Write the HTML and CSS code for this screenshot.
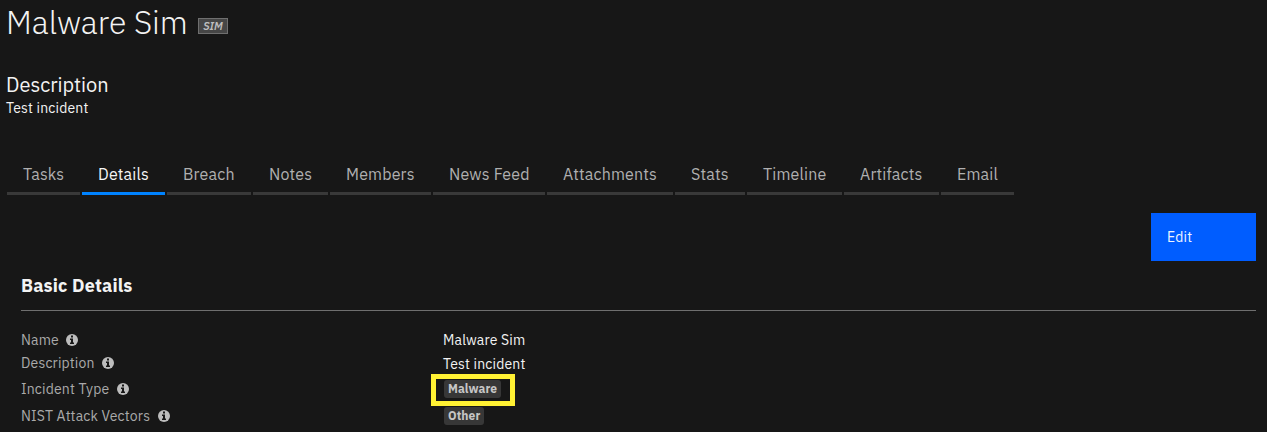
FILE: index.html
```html
<!DOCTYPE html>
<html lang="en">
<head>
<meta charset="utf-8">
<title>Malware Sim</title>
<link rel="stylesheet" href="styles.css">
</head>
<body>
<svg class="sprite" width="0" height="0" aria-hidden="true">
  <symbol id="info" viewBox="0 0 12 12">
    <circle cx="6" cy="6" r="6"/>
    <path class="mark" d="M5 1.5h2v2H5zM4 4.5h3v4h1V10H4V8.5h1V6H4z"/>
  </symbol>
</svg>
<header class="heading">
  <h1 class="title">Malware Sim</h1>
  <span class="sim">SIM</span>
</header>
<section class="summary">
  <h2 class="summary-title">Description</h2>
  <p class="summary-text">Test incident</p>
</section>
<nav class="tabs">
  <a class="tab">Tasks</a>
  <a class="tab active">Details</a>
  <a class="tab">Breach</a>
  <a class="tab">Notes</a>
  <a class="tab">Members</a>
  <a class="tab">News Feed</a>
  <a class="tab">Attachments</a>
  <a class="tab">Stats</a>
  <a class="tab">Timeline</a>
  <a class="tab">Artifacts</a>
  <a class="tab">Email</a>
</nav>
<main class="panel">
  <button class="edit">Edit</button>
  <h3 class="section-title">Basic Details</h3>
  <dl class="fields">
    <dt>Name<svg class="info"><use href="#info"/></svg></dt>
    <dd>Malware Sim</dd>
    <dt>Description<svg class="info"><use href="#info"/></svg></dt>
    <dd class="long-text">Test incident</dd>
    <dt>Incident Type<svg class="info"><use href="#info"/></svg></dt>
    <dd class="marked"><span class="tag tag-malware">Malware</span></dd>
    <dt>NIST Attack Vectors<svg class="info"><use href="#info"/></svg></dt>
    <dd><span class="tag tag-other">Other</span></dd>
  </dl>
</main>
</body>
</html>
```

FILE: styles.css
```css
*, *::before { box-sizing: border-box; }
body {
  margin: 0;
  height: 432px;
  overflow: hidden;
  background: #171717;
  color: #f3f3f3;
  font-family: "IBM Plex Sans", Roboto, "Liberation Sans", sans-serif;
  -webkit-font-smoothing: antialiased;
}
h1, h2, h3, p, dl, dd { margin: 0; }
.sprite { position: absolute; }
.heading { display: flex; height: 46px; padding-left: 6px; }
.title { width: 192px; font-size: 32px; font-weight: 300; line-height: 45px; letter-spacing: 0; white-space: nowrap; }
.sim {
  width: 30px; height: 16px; margin-top: 18px;
  border: 1px solid #6f6f6f; background: #464646; color: #bebebe;
  font-size: 11px; font-style: italic; font-weight: 600; line-height: 15px;
  letter-spacing: 0; text-align: center;
}
.summary { height: 108px; padding: 26px 6px 0; }
.summary-title { font-size: 20px; font-weight: 400; line-height: 26px; letter-spacing: 0; }
.summary-text { font-size: 14px; line-height: 20px; letter-spacing: 0.16px; }
.tabs {
  display: grid; height: 41px; padding-left: 7px; column-gap: 2px;
  grid-template-columns: 73px 83px 84px 75px 101px 112px 126px 70px 95px 95px 73px;
}
.tab {
  padding: 2px 0 0 16px; border-bottom: 3px solid #393939; color: #b0b0b0;
  font-size: 16px; line-height: 36px; letter-spacing: 0.16px; white-space: nowrap;
}
.active { border-color: #0083ff; color: #f5f5f5; }
.panel { display: flex; flex-direction: column; padding: 18px 11px 0 21px; }
.edit {
  align-self: flex-end; width: 105px; height: 48px; padding: 0 16px;
  border: 0; background: #005dff; color: #eef4ff; text-align: left;
  font: 14px/48px "IBM Plex Sans", Roboto, sans-serif; letter-spacing: 0.2px;
}
.section-title {
  height: 50px; border-bottom: 1px solid #6f6f6f;
  font-size: 18px; font-weight: 700; line-height: 50px; letter-spacing: 0.16px;
}
.fields {
  display: grid; grid-template-columns: 422px 1fr;
  grid-template-rows: 23px 24px 28px 26px; padding-top: 17px;
  font-size: 14px; letter-spacing: 0.16px;
}
.fields dt, .fields dd { display: flex; align-items: center; white-space: nowrap; }
.fields dt { color: #aaa; }
.fields .long-text { padding-top: 2px; }
.info { width: 12px; height: 12px; margin-left: 7.5px; fill: #bdbdbd; }
.mark { fill: #171717; }
.tag {
  height: 18px; margin-left: 1px; padding-left: 4px; border-radius: 3px;
  background: #373737; color: #c6c6c6; font-size: 12px; font-weight: 700; line-height: 18px;
  letter-spacing: 0.08px;
}
.tag-malware { width: 57px; }
.tag-other { width: 40px; }
.marked { position: relative; }
.marked::before {
  content: ""; position: absolute; left: -12px; top: -1px;
  width: 84px; height: 32px; border: 5px solid #fff133;
}
```
